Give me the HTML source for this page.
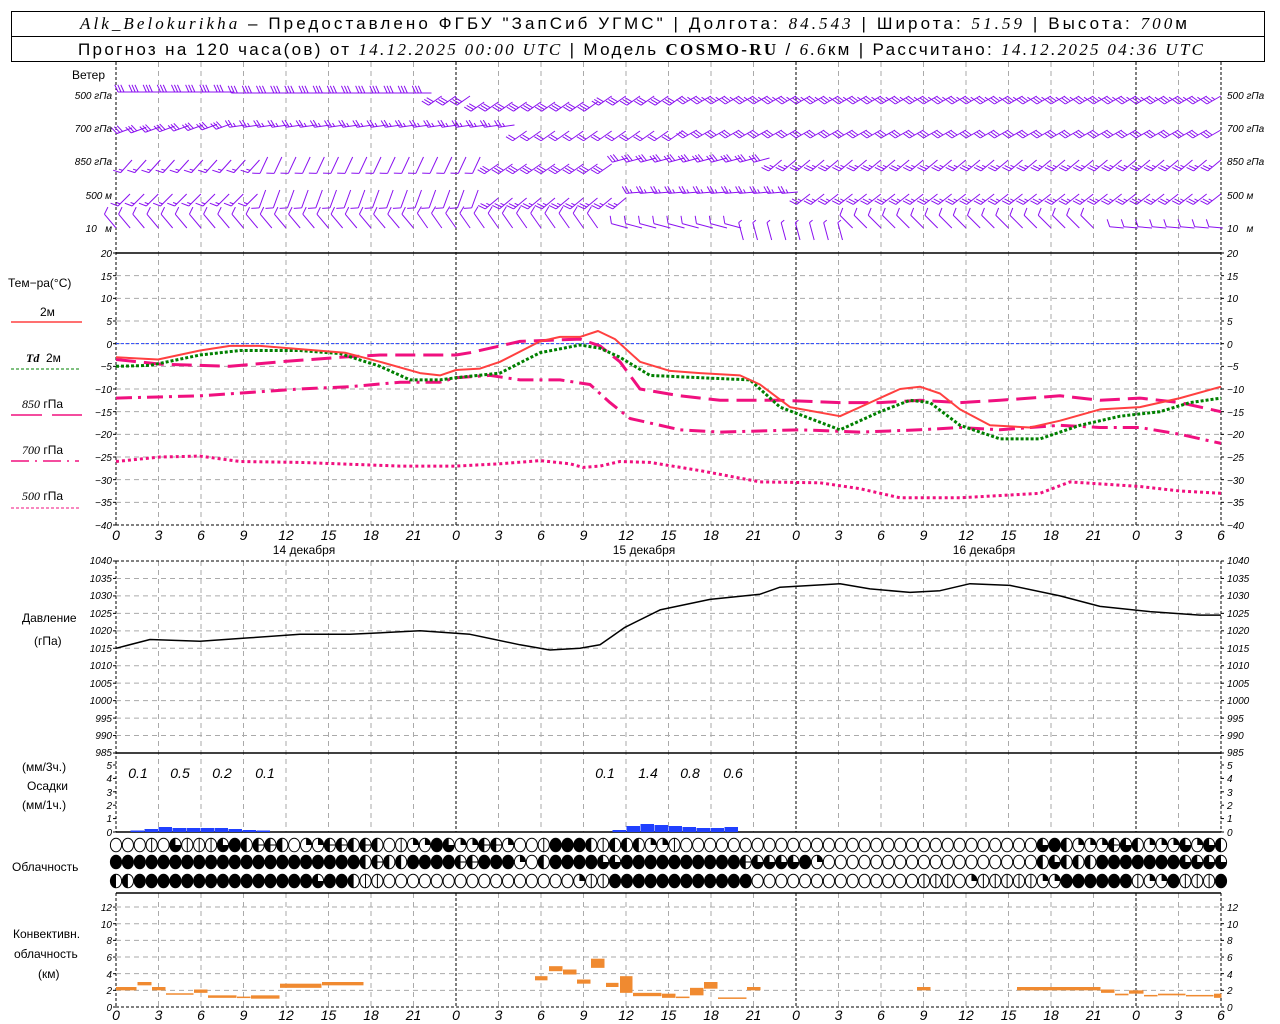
<!DOCTYPE html>
<html><head><meta charset="utf-8"><style>
html,body{margin:0;padding:0;background:#fff;}
svg{display:block;}
.t{font-family:"Liberation Sans",sans-serif;font-size:12px;fill:#000;}
.a{font-family:"Liberation Sans",sans-serif;font-size:10px;font-style:italic;fill:#000;}
.b{font-family:"Liberation Sans",sans-serif;font-size:14px;font-style:italic;fill:#000;}
.h{font-family:"Liberation Sans",sans-serif;font-size:17px;fill:#000;}
.i{font-family:"Liberation Serif",serif;font-style:italic;}
</style></head><body>
<svg id="s" width="1280" height="1024" viewBox="0 0 1280 1024" xmlns="http://www.w3.org/2000/svg">
<rect width="1280" height="1024" fill="#fff"/>
<rect x="11.5" y="11.5" width="1253" height="50" fill="none" stroke="#000"/>
<line x1="11" y1="36.5" x2="1265" y2="36.5" stroke="#000"/>
<g id="grid"></g>
<g id="data"></g>
<text class="h" x="80" y="29" textLength="1107" lengthAdjust="spacing"><tspan class="i">Alk_Belokurikha</tspan> – Предоставлено ФГБУ "ЗапСиб УГМС" | Долгота: <tspan class="i">84.543</tspan> | Широта: <tspan class="i">51.59</tspan> | Высота: <tspan class="i">700</tspan>м</text>
<text class="h" x="78" y="55" textLength="1125" lengthAdjust="spacing">Прогноз на 120 часа(ов) от <tspan class="i">14.12.2025 00:00 UTC</tspan> | Модель <tspan font-family="Liberation Serif" font-weight="bold">COSMO-RU</tspan> / <tspan class="i">6.6</tspan>км | Рассчитано: <tspan class="i">14.12.2025 04:36 UTC</tspan></text>

<text class="t" x="72" y="79">Ветер</text>
<g class="a" text-anchor="end">
<text x="112" y="99">500 гПа</text><text x="112" y="132">700 гПа</text><text x="112" y="165">850 гПа</text><text x="112" y="199">500 м</text><text x="112" y="232">10 &#160; м</text>
</g>
<g class="a">
<text x="1227" y="99">500 гПа</text><text x="1227" y="132">700 гПа</text><text x="1227" y="165">850 гПа</text><text x="1227" y="199">500 м</text><text x="1227" y="232">10 &#160; м</text>
</g>

<text class="t" x="8" y="287">Тем−ра(°C)</text>
<text class="t" x="40" y="316">2м</text>
<line x1="11" y1="322" x2="82" y2="322" stroke="#ff4040" stroke-width="1.5"/>
<text class="t" x="26" y="362"><tspan class="i" font-weight="bold">Td</tspan>&#160; 2м</text>
<line x1="11" y1="369" x2="79" y2="369" stroke="#008000" stroke-width="1" stroke-dasharray="3,2"/>
<text class="t" x="22" y="408"><tspan class="i">850</tspan> гПа</text>
<line x1="11" y1="415" x2="42" y2="415" stroke="#f0107f" stroke-width="1.5"/><line x1="52" y1="415" x2="82" y2="415" stroke="#f0107f" stroke-width="1.5"/>
<text class="t" x="22" y="454"><tspan class="i">700</tspan> гПа</text>
<line x1="11" y1="461" x2="79" y2="461" stroke="#f0107f" stroke-width="1.5" stroke-dasharray="18,6,2,6"/>
<text class="t" x="22" y="500"><tspan class="i">500</tspan> гПа</text>
<line x1="11" y1="508" x2="79" y2="508" stroke="#f0107f" stroke-width="1" stroke-dasharray="3,2"/>

<g class="a" text-anchor="end">
<text x="112" y="257">20</text><text x="112" y="280">15</text><text x="112" y="302">10</text><text x="112" y="325">5</text><text x="112" y="348">0</text><text x="112" y="370">−5</text><text x="112" y="393">−10</text><text x="112" y="416">−15</text><text x="112" y="438">−20</text><text x="112" y="461">−25</text><text x="112" y="484">−30</text><text x="112" y="506">−35</text><text x="112" y="529">−40</text>
</g>
<g class="a">
<text x="1227" y="257">20</text><text x="1227" y="280">15</text><text x="1227" y="302">10</text><text x="1227" y="325">5</text><text x="1227" y="348">0</text><text x="1227" y="370">−5</text><text x="1227" y="393">−10</text><text x="1227" y="416">−15</text><text x="1227" y="438">−20</text><text x="1227" y="461">−25</text><text x="1227" y="484">−30</text><text x="1227" y="506">−35</text><text x="1227" y="529">−40</text>
</g>
<g class="b" text-anchor="middle">
<text x="116" y="540">0</text><text x="158.5" y="540">3</text><text x="201" y="540">6</text><text x="243.5" y="540">9</text><text x="286" y="540">12</text><text x="328.5" y="540">15</text><text x="371" y="540">18</text><text x="413.5" y="540">21</text><text x="456" y="540">0</text><text x="498.5" y="540">3</text><text x="541" y="540">6</text><text x="583.5" y="540">9</text><text x="626" y="540">12</text><text x="668.5" y="540">15</text><text x="711" y="540">18</text><text x="753.5" y="540">21</text><text x="796" y="540">0</text><text x="838.5" y="540">3</text><text x="881" y="540">6</text><text x="923.5" y="540">9</text><text x="966" y="540">12</text><text x="1008.5" y="540">15</text><text x="1051" y="540">18</text><text x="1093.5" y="540">21</text><text x="1136" y="540">0</text><text x="1178.5" y="540">3</text><text x="1221" y="540">6</text>
</g>
<g class="t" text-anchor="middle" font-size="13">
<text x="304" y="554">14 декабря</text><text x="644" y="554">15 декабря</text><text x="984" y="554">16 декабря</text>
</g>

<text class="t" x="22" y="622">Давление</text>
<text class="t" x="34" y="645">(гПа)</text>
<g class="a" text-anchor="end" font-size="9">
<text x="112" y="564">1040</text><text x="112" y="582">1035</text><text x="112" y="599">1030</text><text x="112" y="617">1025</text><text x="112" y="634">1020</text><text x="112" y="652">1015</text><text x="112" y="669">1010</text><text x="112" y="687">1005</text><text x="112" y="704">1000</text><text x="112" y="722">995</text><text x="112" y="739">990</text><text x="112" y="756">985</text>
</g>
<g class="a" font-size="9">
<text x="1227" y="564">1040</text><text x="1227" y="582">1035</text><text x="1227" y="599">1030</text><text x="1227" y="617">1025</text><text x="1227" y="634">1020</text><text x="1227" y="652">1015</text><text x="1227" y="669">1010</text><text x="1227" y="687">1005</text><text x="1227" y="704">1000</text><text x="1227" y="722">995</text><text x="1227" y="739">990</text><text x="1227" y="756">985</text>
</g>

<text class="t" x="22" y="771">(мм/3ч.)</text>
<text class="t" x="27" y="790">Осадки</text>
<text class="t" x="22" y="809">(мм/1ч.)</text>
<g class="a" text-anchor="end">
<text x="112" y="769">5</text><text x="112" y="782">4</text><text x="112" y="796">3</text><text x="112" y="809">2</text><text x="112" y="822">1</text><text x="112" y="836">0</text>
</g>
<g class="a">
<text x="1227" y="769">5</text><text x="1227" y="782">4</text><text x="1227" y="796">3</text><text x="1227" y="809">2</text><text x="1227" y="822">1</text><text x="1227" y="836">0</text>
</g>
<g class="b" text-anchor="middle">
<text x="138" y="778">0.1</text><text x="180" y="778">0.5</text><text x="222" y="778">0.2</text><text x="265" y="778">0.1</text>
<text x="605" y="778">0.1</text><text x="648" y="778">1.4</text><text x="690" y="778">0.8</text><text x="733" y="778">0.6</text>
</g>

<text class="t" x="12" y="871">Облачность</text>

<text class="t" x="13" y="938">Конвективн.</text>
<text class="t" x="14" y="958">облачность</text>
<text class="t" x="38" y="978">(км)</text>
<g class="a" text-anchor="end">
<text x="112" y="911">12</text><text x="112" y="928">10</text><text x="112" y="944">8</text><text x="112" y="961">6</text><text x="112" y="978">4</text><text x="112" y="994">2</text><text x="112" y="1011">0</text>
</g>
<g class="a">
<text x="1227" y="911">12</text><text x="1227" y="928">10</text><text x="1227" y="944">8</text><text x="1227" y="961">6</text><text x="1227" y="978">4</text><text x="1227" y="994">2</text><text x="1227" y="1011">0</text>
</g>
<g class="b" text-anchor="middle">
<text x="116" y="1020">0</text><text x="158.5" y="1020">3</text><text x="201" y="1020">6</text><text x="243.5" y="1020">9</text><text x="286" y="1020">12</text><text x="328.5" y="1020">15</text><text x="371" y="1020">18</text><text x="413.5" y="1020">21</text><text x="456" y="1020">0</text><text x="498.5" y="1020">3</text><text x="541" y="1020">6</text><text x="583.5" y="1020">9</text><text x="626" y="1020">12</text><text x="668.5" y="1020">15</text><text x="711" y="1020">18</text><text x="753.5" y="1020">21</text><text x="796" y="1020">0</text><text x="838.5" y="1020">3</text><text x="881" y="1020">6</text><text x="923.5" y="1020">9</text><text x="966" y="1020">12</text><text x="1008.5" y="1020">15</text><text x="1051" y="1020">18</text><text x="1093.5" y="1020">21</text><text x="1136" y="1020">0</text><text x="1178.5" y="1020">3</text><text x="1221" y="1020">6</text>
</g>
</svg>
<script>
(function(){
var NS="http://www.w3.org/2000/svg";
var G=document.getElementById("grid"),D=document.getElementById("data");
function el(p,tag,a){var e=document.createElementNS(NS,tag);for(var k in a)e.setAttribute(k,a[k]);p.appendChild(e);return e;}
function ln(p,x1,y1,x2,y2,c,w,da){var a={x1:x1,y1:y1,x2:x2,y2:y2,stroke:c,"stroke-width":w||1};if(da)a["stroke-dasharray"]=da;return el(p,"line",a);}
var L=116,R=1221,ph=340/24;
function X(h){return L+h*ph;}
function T(v){return 343.67-v*4.533;}
function P(v){return 561+(1040-v)*3.4909;}
var gc="#aaa",gd="5,4";
var segs=[[62,525],[561,832],[893,1007]];
for(var h=0;h<=78;h+=3){var x=X(h);var day=(h%24==0)||h==78;
 segs.forEach(function(s){ln(G,x,s[0],x,s[1],day?"#000":gc,1,day?"3,2":gd);});}
for(var v=15;v>=-35;v-=5){ln(G,L,T(v),R,T(v),gc,1,gd);}
for(var p=1035;p>=990;p-=5){ln(G,L,P(p),R,P(p),gc,1,gd);}
for(var k=2;k<=12;k+=2){ln(G,L,1007-k*8.33,R,1007-k*8.33,gc,1,gd);}
ln(G,L,253,R,253,"#000",1.5);ln(G,L,525,R,525,"#000",1,"3,2");
ln(G,L,561,R,561,"#000",1,"3,2");ln(G,L,753,R,753,"#000",1.5);
ln(G,L,832,R,832,"#000",1.5);ln(G,L,893,R,893,"#000",1.5);ln(G,L,1007,R,1007,"#000",1,"3,2");
ln(G,L,T(0),R,T(0),"#2040ff",1,"3,2");
function ticks(ys){ys.forEach(function(y){ln(G,L-3,y,L,y,"#000",1);ln(G,R,y,R+3,y,"#000",1);});}
var ty=[];for(var v=20;v>=-40;v-=5)ty.push(T(v));ticks(ty);
ty=[];for(var p=1040;p>=985;p-=5)ty.push(P(p));ticks(ty);
ty=[];for(var k=0;k<=5;k++)ty.push(832-k*13.4);ticks(ty);
ty=[];for(var k=0;k<=12;k+=2)ty.push(1007-k*8.33);ticks(ty);
function curve(pts,fy,c,w,da){var s=pts.map(function(q){return q[0]+","+fy(q[1]).toFixed(1);}).join(" ");var a={points:s,fill:"none",stroke:c,"stroke-width":w,"stroke-linejoin":"round"};if(da)a["stroke-dasharray"]=da;el(D,"polyline",a);}
curve([[116,-26],[160,-25],[200,-24.8],[240,-26],[300,-26.2],[400,-27],[456,-27],[500,-26.5],[540,-25.8],[570,-26.5],[583,-27.3],[600,-27],[620,-26],[650,-26.2],[700,-28],[760,-30.5],[820,-30.7],[860,-32],[900,-34],[960,-34],[1040,-33],[1070,-30.5],[1140,-31.5],[1180,-32.5],[1221,-33]],T,"#f0107f",3,"3,3");
curve([[116,-12],[200,-11.5],[300,-10],[350,-9.5],[400,-8.5],[440,-8.5],[456,-7.5],[490,-7],[520,-8],[560,-8],[590,-9],[610,-13],[630,-16.5],[680,-19],[720,-19.5],[800,-19],[860,-19.5],[920,-19],[960,-18.5],[1000,-19],[1060,-18],[1100,-18.5],[1140,-18.5],[1180,-20],[1221,-22]],T,"#f0107f",3,"16,6,3,6");
curve([[116,-3.5],[160,-4.5],[230,-5],[280,-4],[340,-3],[380,-2.5],[456,-2.5],[470,-2],[520,0.5],[580,1],[600,-0.5],[620,-4],[640,-10],[680,-11.5],[720,-12.5],[780,-12.5],[840,-13],[880,-13],[920,-12.5],[960,-13],[1000,-12.5],[1060,-11.5],[1100,-12.5],[1140,-12],[1180,-13],[1221,-15]],T,"#f0107f",3,"20,8");
curve([[116,-5],[150,-4.8],[200,-2.5],[240,-1.5],[300,-1.5],[340,-2.2],[380,-5],[410,-8],[440,-8],[456,-7.5],[500,-6.5],[540,-2],[580,-0.3],[600,-1],[620,-3],[650,-7],[700,-7.5],[750,-8],[780,-14],[840,-19],[880,-15],[910,-12.5],[930,-13],[960,-18],[1000,-21],[1040,-21],[1080,-18],[1120,-16],[1160,-15],[1190,-13],[1221,-12]],T,"#008000",3,"3,2");
curve([[116,-3],[158,-3.5],[200,-1.5],[230,-0.5],[260,-0.5],[300,-1.2],[345,-2],[380,-4],[420,-6.5],[440,-7],[456,-5.8],[480,-5.5],[500,-4],[540,0.5],[560,1.5],[580,1.5],[598,2.8],[615,1],[640,-4],[670,-6],[700,-6.5],[740,-7],[760,-9],[790,-14],[840,-16],[870,-13],[900,-10],[920,-9.5],[940,-11],[960,-14.5],[990,-18],[1030,-18.5],[1060,-17],[1100,-14.5],[1140,-14],[1180,-12],[1221,-9.5]],T,"#ff4040",2);
curve([[116,1015],[150,1017.5],[200,1017],[250,1018],[300,1019],[350,1019],[420,1020],[470,1019],[520,1016],[550,1014.5],[580,1015],[600,1016],[625,1021],[660,1026],[710,1029],[760,1030.5],[780,1032.5],[840,1033.5],[870,1032],[910,1031],[940,1031.5],[970,1033.5],[1010,1033],[1060,1030],[1100,1027],[1150,1025.5],[1200,1024.5],[1221,1024.5]],P,"#000",1.5);
// precip bars
[[130,1.5],[144,3],[158,5],[172,4],[186,4],[200,4],[214,4],[228,3],[242,2],[256,1.5],[612,2],[626,6],[640,8],[654,7],[668,6],[682,5],[696,4],[710,4],[724,5]].forEach(function(b){
 el(D,"rect",{x:b[0]+0.5,y:832-b[1],width:13.5,height:b[1],fill:"#2040ff"});});
[[116,137,2.0,2.4],[137.5,152,2.6,3.0],[152,166,2.0,2.4],[166,194,1.5,1.65],[194,208,1.7,2.1],[208,237,1.1,1.4],[237,251,1.1,1.25],[251,280,1.0,1.4],[280,322,2.3,2.8],[322,364,2.6,3.0],[535,548,3.2,3.7],[549,563,4.3,4.9],[563,577,3.9,4.5],[577,591,2.8,3.3],[591,605,4.7,5.8],[606,619,2.4,2.9],[620,633,1.7,3.7],[633,662,1.3,1.7],[662,676,1.1,1.6],[676,690,1.1,1.25],[690,704,1.4,2.3],[704,718,2.2,3.0],[718,747,1.0,1.15],[747,761,2.0,2.4],[917,931,2.0,2.4],[1017,1101,2.0,2.4],[1101,1115,1.7,2.1],[1115,1129,1.4,1.6],[1129,1144,1.6,2.0],[1144,1158,1.3,1.45],[1158,1186,1.4,1.6],[1186,1214,1.3,1.45],[1214,1222,1.1,1.6]].forEach(function(b){
 el(D,"rect",{x:b[0],y:1007-b[3]*8.33,width:b[1]-b[0]-0.5,height:Math.max(1.5,(b[3]-b[2])*8.33),fill:"#f08a30"});});
var rows=[
"oovoqvvqfhehoccehehovcfqcceco"+"o"+"vffhvhhccv"+"ooooooooooooooooooooooooo"+"qfhcceqhccqcqh",
"fffffffffffffffff"+"hehhfffeeffcohfffqqf"+"fffffffeqqqfc"+"ooooooooooooooo"+"hqhhffffffqqqq",
"h"+"fffffffffffffqf"+"hvv"+"ooooooooooooo"+"cvv"+"ffffffffff"+"oooooooooooo"+"vvocvvvvccfffffvcfvvvf"];
var ry=[845,862,881],N=94,sp=(1221-116)/(N-1);
rows.forEach(function(s,r){for(var i=0;i<N;i++){var c=s.charAt(Math.min(s.length-1,Math.floor(i*s.length/N)));var cx=116+i*sp,cy=ry[r],rr=5.6;
 var g=el(D,"g",{});
 el(g,"ellipse",{cx:cx,cy:cy,rx:rr,ry:6.8,fill:c=="f"?"#000":"#fff",stroke:"#000","stroke-width":1});
 if(c=="h")el(g,"path",{d:"M"+cx+","+(cy-6.8)+" A"+rr+",6.8 0 0 0 "+cx+","+(cy+6.8)+"Z",fill:"#000"});
 if(c=="q")el(g,"path",{d:"M"+cx+","+cy+" L"+cx+","+(cy-6.8)+" A"+rr+",6.8 0 1 0 "+(cx+rr)+","+cy+"Z",fill:"#000"});
 if(c=="c")el(g,"path",{d:"M"+cx+","+cy+" L"+cx+","+(cy-6.8)+" A"+rr+",6.8 0 0 1 "+(cx+rr)+","+cy+"Z",fill:"#000"});
 if(c=="v")ln(g,cx,cy-6.8,cx,cy+6.8,"#000",1);
 if(c=="e"){ln(g,cx-rr,cy,cx+rr,cy,"#000",1);el(g,"path",{d:"M"+cx+","+(cy-6.8)+" A"+rr+",6.8 0 0 0 "+cx+","+(cy+6.8)+"Z",fill:"#000"});}
}});
var pc="#8a10f0";
function B(x,y,d,n,len){var r=d*Math.PI/180,dx=Math.sin(r),dy=-Math.cos(r);
 var ex=x+dx*len,ey=y+dy*len;ln(D,x,y,ex,ey,pc,1);
 var fx=-dy,fy=dx;var fl=8;
 for(var k=0;k<Math.ceil(n);k++){var f=(k==Math.ceil(n)-1&&n%1)?0.5:1;var bx=ex-dx*k*3,by=ey-dy*k*3;
  ln(D,bx,by,bx+(fx*0.9+dx*0.4)*fl*f,by+(fy*0.9+dy*0.4)*fl*f,pc,1);}}
for(var i=0;i<78;i++){var x=X(i)+4,t=i;
 if(t<22)B(x+14,93-(t<8?1:0),270,3,16);else if(t<40)B(x+10,96+(t>24&&t<34?6:0),235,3,16);else B(x+10,96,240,3.5,16);
 if(t<8)B(x+12,128-t*0.6,250,3,16);else if(t<28)B(x+12,125,262,2.5,16);else if(t<40)B(x+10,131,235,2,17);else B(x+10,130,240,3,16);
 if(t<10)B(x+12,160,222,1.5,17);else if(t<26)B(x+6,157,205,1,18);else if(t<35)B(x+10,164,235,3,17);else if(t<46)B(x+12,158,255,3,16);else B(x+10,160,230,2.5,17);
 if(t<10)B(x+10,194,225,1.5,17);else if(t<26)B(x+4,190,200,1,19);else if(t<36)B(x+10,198,230,2.5,17);else if(t<48)B(x+12,192,265,2.5,16);else B(x+10,194,232,2.5,17);
 if(t<22)B(x-4,228,320,1,18);else if(t<35)B(x-4,228,325,1,18);else if(t<44)B(x+12,228,285,1,17);else if(t<52)B(x,240,345,0.5,18);else if(t<70)B(x-4,228,315,1,18);else B(x+12,228,275,1,14);
}
})();
</script>
</body></html>
